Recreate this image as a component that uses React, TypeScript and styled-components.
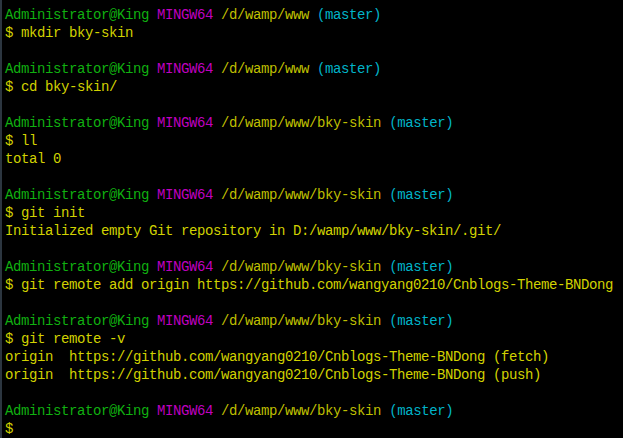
import React from "react";
import styled, { createGlobalStyle } from "styled-components";

const Global = createGlobalStyle`
  html, body { margin: 0; padding: 0; background: #000; }
  #root { width: 623px; height: 438px; overflow: hidden; }
`;

const Terminal = styled.div`
  box-sizing: border-box;
  width: 623px;
  height: 438px;
  background: #000;
  border-left: 2px solid #2c3640;
  padding: 6px 0 0 3px;
  font-family: "Liberation Mono", "DejaVu Sans Mono", monospace;
  font-size: 14px;
  letter-spacing: -0.4px;
  line-height: 18px;
  color: #cfcf00;
`;

const Line = styled.div`
  height: 18px;
  white-space: pre;
`;

type Tone = "green" | "magenta" | "path" | "cyan" | "text";

const colors: Record<Tone, string> = {
  green: "#10b010",
  magenta: "#bf00bf",
  path: "#bfbf00",
  cyan: "#00b4c8",
  text: "#d2d200",
};

const Seg = styled.span<{ $tone: Tone }>`
  color: ${(p) => colors[p.$tone]};
`;

const Prompt: React.FC<{ path: string }> = ({ path }) => (
  <Line>
    <Seg $tone="green">Administrator@King</Seg> <Seg $tone="magenta">MINGW64</Seg>{" "}
    <Seg $tone="path">{path}</Seg> <Seg $tone="cyan">(master)</Seg>
  </Line>
);

const Out: React.FC<{ text: string }> = ({ text }) => (
  <Line>
    <Seg $tone="text">{text}</Seg>
  </Line>
);

const Blank = () => <Line> </Line>;

export default function App() {
  const repo = "https://github.com/wangyang0210/Cnblogs-Theme-BNDong";
  return (
    <>
      <Global />
      <Terminal>
        <Prompt path="/d/wamp/www" />
        <Out text="$ mkdir bky-skin" />
        <Blank />
        <Prompt path="/d/wamp/www" />
        <Out text="$ cd bky-skin/" />
        <Blank />
        <Prompt path="/d/wamp/www/bky-skin" />
        <Out text="$ ll" />
        <Out text="total 0" />
        <Blank />
        <Prompt path="/d/wamp/www/bky-skin" />
        <Out text="$ git init" />
        <Out text="Initialized empty Git repository in D:/wamp/www/bky-skin/.git/" />
        <Blank />
        <Prompt path="/d/wamp/www/bky-skin" />
        <Out text={`$ git remote add origin ${repo}`} />
        <Blank />
        <Prompt path="/d/wamp/www/bky-skin" />
        <Out text="$ git remote -v" />
        <Out text={`origin  ${repo} (fetch)`} />
        <Out text={`origin  ${repo} (push)`} />
        <Blank />
        <Prompt path="/d/wamp/www/bky-skin" />
        <Out text="$" />
      </Terminal>
    </>
  );
}
